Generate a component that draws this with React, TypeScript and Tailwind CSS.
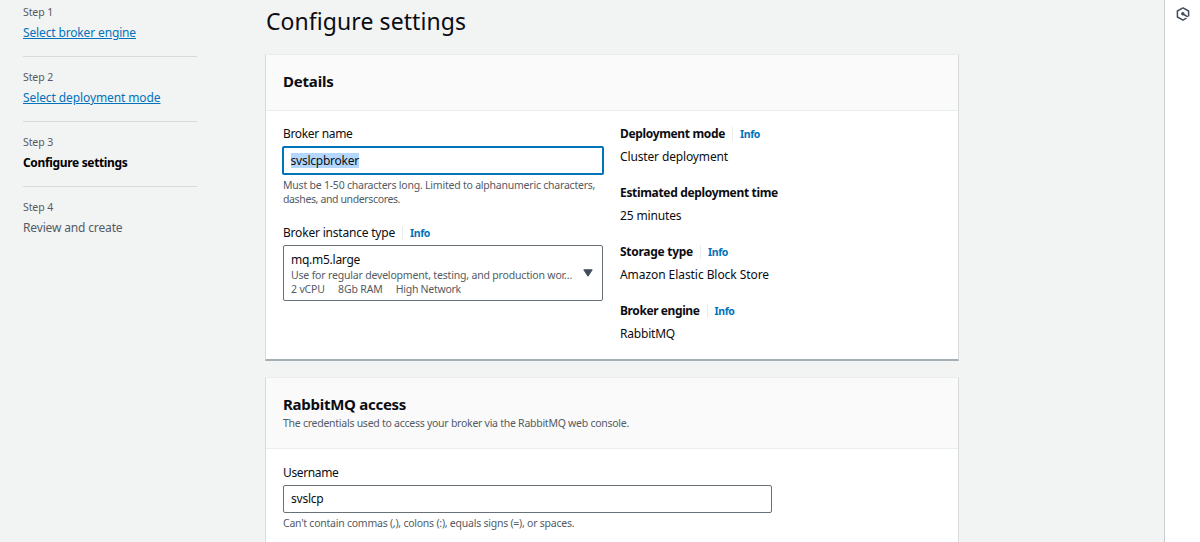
import type { ReactNode } from "react";

function Step({
  label,
  first,
  last,
  children,
}: {
  label: string;
  first?: boolean;
  last?: boolean;
  children: ReactNode;
}) {
  return (
    <li
      className={`${first ? "pt-[4px]" : "pt-[12px]"} ${
        last ? "" : "border-b border-[#d5dbdb] pb-[13px]"
      }`}
    >
      <div className="text-[10.5px] leading-[16px] tracking-[-0.1px] text-[#545b64]">{label}</div>
      <div className="mt-[3px] text-[12px] leading-[20px]">{children}</div>
    </li>
  );
}

function Info() {
  return (
    <a className="ml-[7px] flex h-[14px] items-center border-l border-[#eaeded] pl-[7px] text-[10.5px] leading-[14px] font-bold tracking-[-0.39px] text-[#0073bb]">
      Info
    </a>
  );
}

function Detail({ label, info, children }: { label: ReactNode; info?: boolean; children: ReactNode }) {
  return (
    <div>
      <dt className="flex h-[20px] items-center font-bold">
        {label}
        {info && <Info />}
      </dt>
      <dd className="mt-[3px] h-[20px]">{children}</dd>
    </div>
  );
}

export default function App() {
  return (
    <div className="flex h-[542px] w-[1200px] overflow-hidden bg-[#f2f3f3] font-['Noto_Sans',sans-serif] text-[12px] leading-[20px] text-[#0b0d12]">
      <nav className="w-[265px] shrink-0 pl-[23px]">
        <ol className="w-[174px]">
          <Step label="Step 1" first>
            <a className="tracking-[-0.145px] text-[#0073bb] underline">Select broker engine</a>
          </Step>
          <Step label="Step 2">
            <a className="tracking-[-0.1px] text-[#0073bb] underline">Select deployment mode</a>
          </Step>
          <Step label="Step 3">
            <span className="font-bold tracking-[-0.34px] text-black">Configure settings</span>
          </Step>
          <Step label="Step 4" last>
            <span className="tracking-[-0.15px] text-[#545b64]">Review and create</span>
          </Step>
        </ol>
      </nav>

      <main className="w-[694px] shrink-0">
        <h1 className="mt-[5px] h-[32px] pl-px text-[23px] leading-[32px] tracking-[0.07px]">
          Configure settings
        </h1>

        <section className="mt-[17px] flex h-[307px] flex-col rounded-b-[1px] border-x border-t border-b-2 border-x-[#d5dbdb] border-t-[#eaeded] border-b-[#a5aeb3] bg-white">
          <header className="flex h-[56px] shrink-0 items-center border-b border-[#eaeded] bg-[#fafafa] pb-[3px] pl-[17px]">
            <h2 className="text-[15px] leading-[20px] font-bold tracking-[-0.2px]">Details</h2>
          </header>
          <div className="flex pt-[13px] pl-[17px]">
            <div className="w-[320px]">
              <label className="block tracking-[-0.33px]">Broker name</label>
              <div className="-mx-px mt-[2px] flex h-[29px] items-center rounded-[2px] border-2 border-[#0073bb] bg-white pl-[6.5px]">
                <span className="h-[15px] bg-[#b3d7ff] leading-[15px] tracking-[-0.23px]">svslcpbroker</span>
              </div>
              <p className="mt-[3px] text-[10.5px] leading-[14px] text-[#545b64]">
                <span className="block tracking-[-0.22px] whitespace-nowrap">
                  Must be 1-50 characters long. Limited to alphanumeric characters,
                </span>
                <span className="block tracking-[-0.37px]">dashes, and underscores.</span>
              </p>
              <div className="mt-[17px] flex h-[20px] items-center">
                <label className="tracking-[-0.2px]">Broker instance type</label>
                <Info />
              </div>
              <div className="mt-[2px] flex h-[56px] items-center justify-between rounded-[2px] border border-[#687078] bg-white pr-[9px] pl-[7px]">
                <div className="text-[10.5px] leading-[14px] text-[#545b64]">
                  <div className="pt-px text-[12px] leading-[17px] tracking-[-0.26px] text-[#0b0d12]">mq.m5.large</div>
                  <div className="tracking-[-0.18px] whitespace-nowrap">
                    Use for regular development, testing, and production wor…
                  </div>
                  <div className="flex gap-[13.3px]">
                    <span className="tracking-[-0.16px]">2 vCPU</span>
                    <span className="tracking-[-0.16px]">8Gb RAM</span>
                    <span className="tracking-[-0.285px]">High Network</span>
                  </div>
                </div>
                <svg width="10" height="8" viewBox="0 0 10 8" className="shrink-0">
                  <path d="M0.8 0.8h8.4L5 7.2z" fill="#414d5c" stroke="#414d5c" strokeLinejoin="round" />
                </svg>
              </div>
            </div>
            <dl className="ml-[17px] flex flex-col gap-[16px]">
              <Detail label={<span className="tracking-[-0.34px]">Deployment mode</span>} info>
                <span className="tracking-[-0.14px]">Cluster deployment</span>
              </Detail>
              <Detail label={<span className="tracking-[-0.33px]">Estimated deployment time</span>}>
                <span className="tracking-[-0.14px]">25 minutes</span>
              </Detail>
              <Detail label={<span className="tracking-[-0.275px]">Storage type</span>} info>
                <span className="tracking-[-0.065px]">Amazon Elastic Block Store</span>
              </Detail>
              <Detail label={<span className="tracking-[-0.405px]">Broker engine</span>} info>
                <span className="tracking-[-0.2px]">RabbitMQ</span>
              </Detail>
            </dl>
          </div>
        </section>

        <section className="mt-[16px] h-[200px] border-x border-t border-x-[#d5dbdb] border-t-[#eaeded] bg-white">
          <header className="h-[71px] border-b border-[#eaeded] bg-[#fafafa] pt-[16px] pl-[17px]">
            <h2 className="text-[15px] leading-[20px] font-bold tracking-[-0.27px]">RabbitMQ access</h2>
            <p className="mt-[2px] text-[10.5px] leading-[14px] tracking-[-0.26px] text-[#545b64]">
              The credentials used to access your broker via the RabbitMQ web console.
            </p>
          </header>
          <div className="pt-[14px] pl-[17px]">
            <label className="block tracking-[-0.36px]">Username</label>
            <div className="mt-[2px] flex h-[28px] w-[489px] items-center rounded-[2px] border border-[#687078] bg-white pl-[7px]">
              <span className="tracking-[-0.23px]">svslcp</span>
            </div>
            <p className="mt-[3px] text-[10.5px] leading-[14px] tracking-[-0.24px] text-[#545b64]">
              Can't contain commas (,), colons (:), equals signs (=), or spaces.
            </p>
          </div>
        </section>
      </main>

      <aside className="ml-auto flex w-[36px] justify-center border-l border-[#c9cfd1] bg-white pt-[7px]">
        <svg width="14" height="14" viewBox="0 0 14 14" fill="none" stroke="#414d5c" strokeWidth="1.5" className="shrink-0">
          <path d="M10.4 11.2L7 13.1L1.4 10V4L7 0.9L12.6 4v5.6" strokeLinejoin="round" />
          <circle cx="6.8" cy="6.8" r="1.7" fill="#414d5c" stroke="none" />
          <path d="M7 7l4.8 2.8" />
        </svg>
      </aside>
    </div>
  );
}
